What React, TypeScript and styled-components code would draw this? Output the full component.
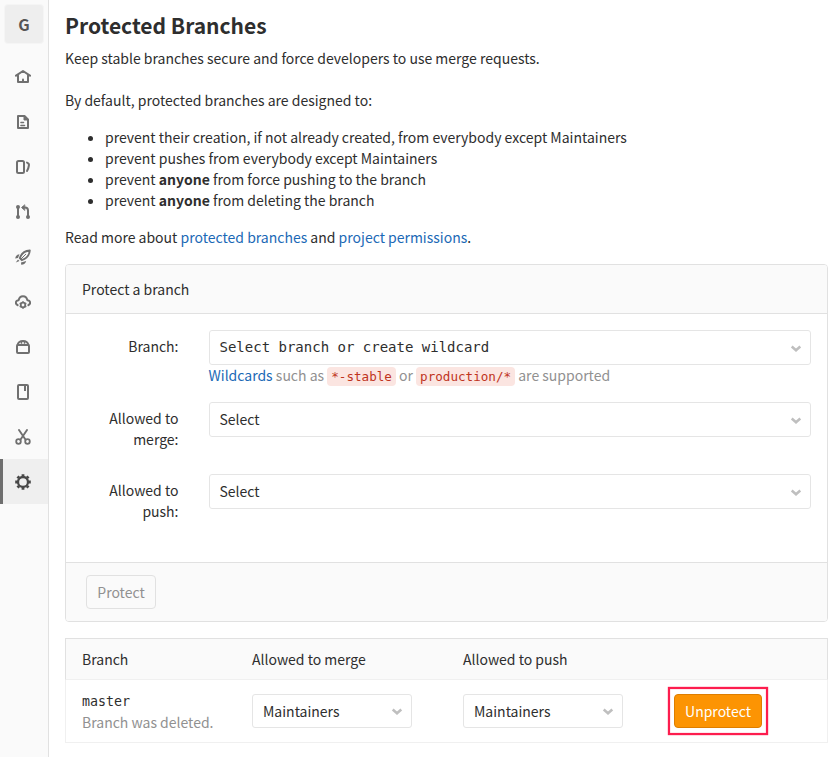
import React from "react";
import styled, { createGlobalStyle, css } from "styled-components";

const GlobalStyle = createGlobalStyle`
  *, *::before, *::after { box-sizing: border-box; }
  html, body { margin: 0; padding: 0; background: #fff; overflow: hidden; }
  body {
    font-family: "Noto Sans CJK SC", "Noto Sans", sans-serif;
    font-size: 14px;
    line-height: 21px;
    color: #2e2e2e;
  }
`;

const mono = css`
  font-family: "DejaVu Sans Mono", "Liberation Mono", monospace;
`;

const Page = styled.div`
  display: flex;
  height: 757px;
`;

const Sidebar = styled.nav`
  flex: none;
  width: 49px;
  background: #fafafa;
  border-right: 1px solid #e1e1e1;
`;

const AvatarSlot = styled.div`
  height: 54px;
  padding: 4px 0 0 4px;
`;

const Avatar = styled.div`
  width: 40px;
  height: 40px;
  border: 1px solid #f5f5f5;
  border-radius: 4px;
  background: #eee;
  color: #555;
  font-size: 16px;
  font-weight: 700;
  line-height: 38px;
  text-align: center;
`;

const NavItem = styled.a<{ $active?: boolean }>`
  display: flex;
  align-items: center;
  height: 45px;
  padding-left: ${(p) => (p.$active ? 12 : 15)}px;
  border-left: ${(p) => (p.$active ? "3px solid #6e6e6e" : "none")};
  background: ${(p) => (p.$active ? "#efefef" : "transparent")};
  color: ${(p) => (p.$active ? "#484848" : "#707070")};
`;

const Content = styled.main`
  width: 779px;
  padding: 9px 0 0 16px;
`;

const Title = styled.h4`
  margin: 0 0 7px;
  font-size: 21px;
  line-height: 32px;
  font-weight: 700;
`;

const Text = styled.p<{ $gap: number }>`
  margin: 0 0 ${(p) => p.$gap}px;
`;

const List = styled.ul`
  margin: 0 0 16px;
  padding: 0 0 0 40px;
`;

const Link = styled.a`
  color: #1b69b6;
`;

const Card = styled.section`
  border: 1px solid #e1e1e1;
  border-radius: 4px;
  overflow: hidden;
`;

const CardHeader = styled.header`
  height: 49px;
  padding: 14px 16px;
  background: #fafafa;
  border-bottom: 1px solid #e1e1e1;
`;

const CardBody = styled.div`
  height: 248px;
  padding: 16px;
`;

const CardFooter = styled.footer`
  height: 59px;
  padding: 12px 20px;
  background: #fafafa;
  border-top: 1px solid #e1e1e1;
`;

const FormRow = styled.div`
  display: grid;
  grid-template-columns: 96.500px 602.500px;
  column-gap: 30px;
  height: 72px;
`;

const Label = styled.label`
  padding-top: 6px;
  text-align: right;
`;

const SelectBox = styled.button<{ $height: number; $mono?: boolean }>`
  display: flex;
  align-items: center;
  justify-content: space-between;
  width: 100%;
  height: ${(p) => p.$height}px;
  padding: 0 8px 0 10px;
  border: 1px solid #e5e5e5;
  border-radius: 3px;
  background: #fff;
  color: #2e2e2e;
  font: inherit;
  text-align: left;
  ${(p) => p.$mono && mono}
`;

const Help = styled.div`
  color: #919191;
  white-space: nowrap;
`;

const Code = styled.code`
  ${mono}
  padding: 2px 4px;
  border-radius: 4px;
  background: #fbe5e1;
  color: #c0341d;
  font-size: 12.6px;
`;

const Button = styled.button<{ $warning?: boolean }>`
  height: 34px;
  min-width: 70px;
  padding: 0 10px;
  border: 1px solid ${(p) => (p.$warning ? "#de7e00" : "#e1e1e1")};
  border-radius: 4px;
  background: ${(p) => (p.$warning ? "#fc9403" : "#fafafa")};
  color: ${(p) => (p.$warning ? "#fff" : "#919191")};
  font: inherit;
`;

const Table = styled.div`
  margin-top: 16px;
`;

const TableRow = styled.div<{ $head?: boolean }>`
  display: grid;
  grid-template-columns: 170px 160px 51px 160px 45px 100px;
  align-items: center;
  height: ${(p) => (p.$head ? 42 : 63)}px;
  padding-left: 16px;
  border: 1px solid ${(p) => (p.$head ? "#e1e1e1" : "#f0f0f0")};
  ${(p) => (p.$head ? "border-bottom-color: #f0f0f0;" : "border-top: none;")}
  background: ${(p) => (p.$head ? "#fafafa" : "#fff")};
  & > :nth-child(3) { grid-column: 4; white-space: nowrap; }
  & > :nth-child(4) { grid-column: 6; }
`;

const BranchCell = styled.div`
  padding-top: 1px;
`;

const RefName = styled.div`
  ${mono}
  font-size: 13.3px;
`;

const Muted = styled.div`
  color: #919191;
`;

const Highlight = styled.div`
  display: flex;
  align-items: center;
  justify-content: center;
  width: 100px;
  height: 48px;
  border: 2px solid #fd1d4e;
  box-shadow: inset 0 0 1px #fd1d4e, 0 0 1px #fd1d4e;
`;

const IconSvg = styled.svg`
  display: block;
  flex: none;
  fill: none;
  stroke: currentColor;
  stroke-width: 2;
  stroke-linecap: round;
  stroke-linejoin: round;
`;

const Icon = ({ children }: { children: React.ReactNode }) => (
  <IconSvg width="16" height="16" viewBox="0 0 16 16">{children}</IconSvg>
);

const Chevron = () => (
  <IconSvg width="12" height="8" viewBox="0 0 12 8">
    <path d="M1.700 2.500 6 6.300l4.300-3.800" stroke="#bfbfbf" strokeWidth="2.500" strokeLinecap="butt" strokeLinejoin="miter" />
  </IconSvg>
);

const icons: Record<string, React.ReactNode> = {
  Project: (
    <>
      <path d="M1 6.700 8 2l7 4.700M3 6.500V13h10V6.500" />
      <path d="M8 10.500V13" />
    </>
  ),
  Repository: (
    <>
      <path d="M3 2h6.500L13 5.500V14H3z" />
      <path d="M9 2v4h4z" fill="currentColor" strokeWidth="1" />
      <path d="M6 8.500h2.500M6 11.500h3.500" strokeWidth="1.600" />
    </>
  ),
  Issues: (
    <>
      <rect x="2" y="2" width="7" height="12" rx="1.500" />
      <path d="M12 3.600c1.500.5 2.200 1.400 1.900 2.900-.3 2-.8 3.800-1.900 5.500" />
    </>
  ),
  "Merge Requests": (
    <>
      <path d="M3 3v10M13 13V6.500C13 4.300 11.800 3.500 10 3.500H8" />
      <path d="M9.500 1 6.500 3.500l3 2.700z" fill="currentColor" strokeWidth=".8" />
      <g fill="currentColor" stroke="none">
        <circle cx="3" cy="3" r="2" />
        <circle cx="3" cy="13" r="2" />
        <circle cx="13" cy="13" r="2" />
      </g>
    </>
  ),
  "CI / CD": (
    <>
      <path d="M14.800 1.500C9.800 1.800 6.500 4 4.800 9.200l2 2c5-1.800 7.600-5 8-9.700z" strokeWidth="1.900" />
      <path d="M6 10l4.700-4.700" strokeWidth="1" />
      <path d="M4.500 5.200C2 5.400.6 7 .2 9.500L3 9zM11.200 12c-.5 2.300-2.200 3.600-5 3.800l-.2-2.200zM3 10.500.8 13.500l3.700-1.400z" fill="currentColor" stroke="none" />
    </>
  ),
  Operations: (
    <>
      <path d="M2.600 11.200C-.3 9.500.8 6.200 3.700 6.200 4.600 1 11.400 1 12.300 6.200c2.900 0 4 3.300 1.100 5" />
      <circle cx="8" cy="11" r="2.300" strokeWidth="1.800" />
      <path d="M8 7.300v1M8 13.700v1M4.700 9.100l.9.500M10.400 12.400l.9.500M4.700 12.900l.9-.5M10.400 9.600l.9-.5" strokeWidth="1.500" strokeLinecap="butt" />
    </>
  ),
  Registry: (
    <>
      <rect x="2" y="6" width="12" height="8" rx="1" />
      <path d="M2.500 6C3.200 3.300 4.800 2 8 2s4.800 1.300 5.500 4" />
      <path d="M6.500 2.500v2.300M9.500 2.500v2.300" strokeWidth="1.500" strokeLinecap="butt" />
    </>
  ),
  Wiki: (
    <>
      <rect x="3" y="1" width="10" height="14" rx="1" />
      <path d="M10 2v5" strokeLinecap="butt" />
    </>
  ),
  Snippets: (
    <>
      <path d="m4 1 6.600 9.800M12 1 5.400 10.800" strokeWidth="1.900" />
      <circle cx="3.500" cy="12.500" r="2.300" strokeWidth="1.800" />
      <circle cx="12.500" cy="12.500" r="2.300" strokeWidth="1.800" />
    </>
  ),
  Settings: (
    <>
      <circle cx="8" cy="8" r="5" strokeWidth="2.300" />
      <path d="M8 .2v2.300M8 13.500v2.300M.2 8h2.300M13.500 8h2.300M2.500 2.500l1.600 1.600M11.900 11.900l1.600 1.600M2.500 13.500l1.600-1.600M11.900 4.100l1.600-1.600" strokeWidth="2.800" strokeLinecap="butt" />
    </>
  ),
};

const Select = ({ text, height = 35, mono: isMono }: { text: string; height?: number; mono?: boolean }) => (
  <SelectBox $height={height} $mono={isMono}>
    <span>{text}</span>
    <Chevron />
  </SelectBox>
);

export default function App() {
  return (
    <>
      <GlobalStyle />
      <Page>
        <Sidebar>
          <AvatarSlot><Avatar>G</Avatar></AvatarSlot>
          {Object.entries(icons).map(([name, drawing]) => (
            <NavItem key={name} aria-label={name} $active={name === "Settings"}>
              <Icon>{drawing}</Icon>
            </NavItem>
          ))}
        </Sidebar>
        <Content>
          <Title>Protected Branches</Title>
          <Text $gap={21}>Keep stable branches secure and force developers to use merge requests.</Text>
          <Text $gap={16}>By default, protected branches are designed to:</Text>
          <List>
            <li>prevent their creation, if not already created, from everybody except Maintainers</li>
            <li>prevent pushes from everybody except Maintainers</li>
            <li>prevent <strong>anyone</strong> from force pushing to the branch</li>
            <li>prevent <strong>anyone</strong> from deleting the branch</li>
          </List>
          <Text $gap={16}>
            Read more about <Link>protected branches</Link> and <Link>project permissions</Link>.
          </Text>
          <Card>
            <CardHeader>Protect a branch</CardHeader>
            <CardBody>
              <FormRow>
                <Label>Branch:</Label>
                <div>
                  <Select text="Select branch or create wildcard" mono />
                  <Help>
                    <Link>Wildcards</Link> such as <Code>*-stable</Code> or <Code>production/*</Code> are supported
                  </Help>
                </div>
              </FormRow>
              <FormRow>
                <Label>Allowed to merge:</Label>
                <div><Select text="Select" /></div>
              </FormRow>
              <FormRow>
                <Label>Allowed to push:</Label>
                <div><Select text="Select" /></div>
              </FormRow>
            </CardBody>
            <CardFooter><Button disabled>Protect</Button></CardFooter>
          </Card>
          <Table>
            <TableRow $head>
              <div>Branch</div>
              <div>Allowed to merge</div>
              <div>Allowed to push</div>
            </TableRow>
            <TableRow>
              <BranchCell>
                <RefName>master</RefName>
                <Muted>Branch was deleted.</Muted>
              </BranchCell>
              <div><Select text="Maintainers" height={34} /></div>
              <div><Select text="Maintainers" height={34} /></div>
              <Highlight><Button $warning>Unprotect</Button></Highlight>
            </TableRow>
          </Table>
        </Content>
      </Page>
    </>
  );
}
